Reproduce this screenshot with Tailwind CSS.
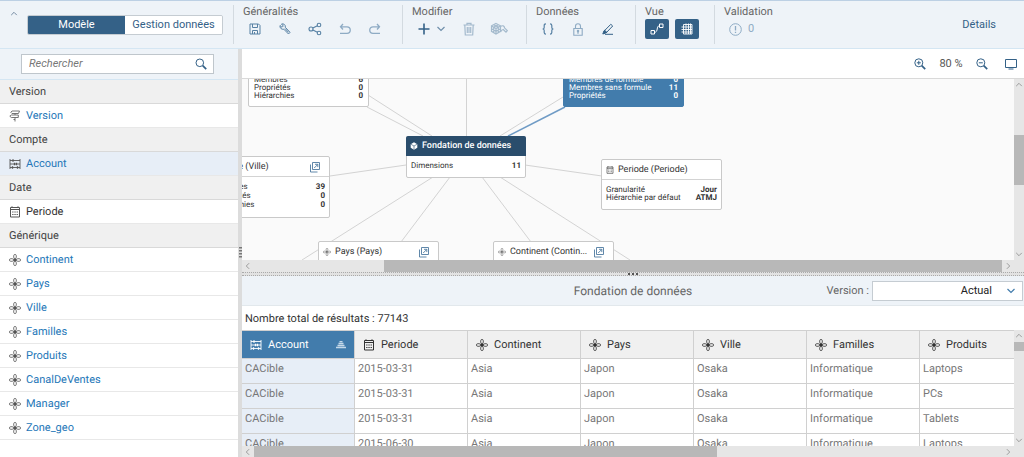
<!DOCTYPE html>
<html lang="fr">
<head>
<meta charset="utf-8">
<meta name="viewport" content="width=device-width, initial-scale=1">
<title>Modèle</title>
<script src="https://cdn.jsdelivr.net/npm/@tailwindcss/browser@4"></script>
</head>
<body class="h-screen overflow-hidden bg-white font-['Roboto','Noto_Sans',sans-serif] text-[11px] leading-4 text-[#333] [text-rendering:geometricPrecision]">

<!-- Shared icons -->
<svg class="hidden" aria-hidden="true">
  <symbol id="dim" viewBox="0 0 12 12" fill="none" stroke="currentColor" stroke-width="0.8">
    <rect x="4.700" y=".5" width="2.600" height="4" rx="1.200"/><rect x="4.700" y="7.500" width="2.600" height="4" rx="1.200"/>
    <rect x=".5" y="4.700" width="4" height="2.600" rx="1.200"/><rect x="7.500" y="4.700" width="4" height="2.600" rx="1.200"/>
    <rect x="5" y="5" width="2" height="2" fill="currentColor"/>
  </symbol>
  <symbol id="cal" viewBox="0 0 12 12" fill="none" stroke="currentColor">
    <path d="M1.500 1.500h9v9.500h-9z"/><path d="M1.500 3.500h9"/><path d="M3 .3v1.500M9 .3v1.500"/>
    <path d="M3.200 6h1.300M5.400 6h1.300M7.600 6h1.300M3.200 8.500h1.300M5.400 8.500h1.300M7.600 8.500h1.300"/>
  </symbol>
  <symbol id="acc" viewBox="0 0 12 12" fill="none" stroke="currentColor" stroke-width="0.9">
    <path d="M1 1v10M11 1v10M1 2.500h10M1 6h10M1 9.500h10"/><path d="M4 1.300v2.400M7.500 4.800v2.400M5.500 4.800v2.400M8.500 8.300v2.400M3.500 8.300v2.400" stroke-width="1.300"/>
  </symbol>
  <symbol id="ver" viewBox="0 0 12 12" fill="none" stroke="currentColor" stroke-width="0.9">
    <path d="M3 1h7.500l-1 2.500H3L1.800 2.300zM.8 6.200L2.300 5h7v2.500h-7zM6 7.500v4M6 3.500V5M4.500 9.500H6"/>
  </symbol>
  <symbol id="open" viewBox="0 0 12 12" fill="none" stroke="currentColor" stroke-width=".9">
    <path d="M3.500 1.500h7v7h-7zM1.500 3.500v7.500h7"/><path d="M5.200 7l3.500-3.500M6 3.300h2.800v2.800"/>
  </symbol>
  <symbol id="up" viewBox="0 0 10 6" fill="none" stroke="currentColor" stroke-width="1.200"><path d="M1.500 5L5 1.500 8.500 5"/></symbol>
  <symbol id="down" viewBox="0 0 10 6" fill="none" stroke="currentColor" stroke-width="1.200"><path d="M1.500 1L5 4.500 8.500 1"/></symbol>
  <symbol id="left" viewBox="0 0 6 10" fill="none" stroke="currentColor" stroke-width="1.200"><path d="M5 1.500L1.500 5 5 8.500"/></symbol>
  <symbol id="right" viewBox="0 0 6 10" fill="none" stroke="currentColor" stroke-width="1.200"><path d="M1 1.500L4.500 5 1 8.500"/></symbol>
</svg>

<div class="flex h-full flex-col">
  <!-- Toolbar -->
  <header class="flex h-[49px] shrink-0 items-stretch border-t border-b border-t-[#bcd0e4] border-b-[#d4e6f3] bg-[#eef3f8] text-[#346187]">
    <div class="flex w-[233px] shrink-0">
      <button aria-label="Réduire" class="flex h-6 w-[27px] items-center justify-center pl-px text-[#7189a0]"><svg class="h-[5px] w-2"><use href="#up"/></svg></button>
      <div class="mt-3.5 flex h-5 w-[196px] overflow-hidden rounded-xs border border-[#c5ccd2]">
        <button class="-my-px w-1/2 bg-[#346187] text-white">Modèle</button>
        <button class="w-1/2 bg-white">Gestion données</button>
      </div>
    </div>
    <section class="my-1 flex flex-col border-l border-[#d3dae0] pr-[15px] pl-[9px]">
      <h2 class="h-[14px] text-[#666] leading-[14px]">Généralités</h2>
      <div class="flex h-5 gap-1.5 text-[#5781a4]">
        <button aria-label="Enregistrer" class="grid w-6 place-items-center"><svg class="size-3" viewBox="0 0 12 12" fill="none" stroke="currentColor"><path d="M1 1h8.500L11 2.500V11H1zM3.500 1v3.500h5V1M3.500 11V7.500h5V11M5.500 9v2"/></svg></button>
        <button aria-label="Paramètres" class="grid w-6 place-items-center"><svg class="size-3" viewBox="0 0 12 12" fill="none" stroke="currentColor"><path d="M1 2.500l2 1.800L4.300 3 2.500 1C4.500.3 6.800 1.800 6.300 4.300l4.700 5L9.500 11 4.800 6.200C2.500 6.800.5 4.800 1 2.500zM6 5.500l3.500 3.800"/></svg></button>
        <button aria-label="Partager" class="grid w-6 place-items-center"><svg class="size-3.5" viewBox="0 0 14 14" fill="none" stroke="currentColor" stroke-width="1.100"><circle cx="3" cy="7" r="2"/><circle cx="11" cy="3" r="1.800"/><circle cx="11" cy="11" r="1.800"/><path d="M4.800 6.100l4.600-2.300M4.800 7.900l4.600 2.300"/></svg></button>
        <button aria-label="Annuler" class="grid w-6 place-items-center text-[#8eabc4]"><svg class="size-3" viewBox="0 0 12 12" fill="none" stroke="currentColor" stroke-width="1.300"><path d="M4 1L1.500 3.800 4 6.500M1.500 3.800H8a3.100 3.100 0 010 6.500H1"/></svg></button>
        <button aria-label="Rétablir" class="grid w-6 place-items-center text-[#8eabc4]"><svg class="size-3" viewBox="0 0 12 12" fill="none" stroke="currentColor" stroke-width="1.300"><path d="M8 1l2.500 2.800L8 6.500M10.500 3.800H4a3.100 3.100 0 000 6.500h7"/></svg></button>
      </div>
    </section>
    <section class="my-1 flex flex-col border-l border-[#d3dae0] pr-[15px] pl-[9px]">
      <h2 class="h-[14px] text-[#666] leading-[14px]">Modifier</h2>
      <div class="flex h-5 gap-1.5 text-[#a4bacd]">
        <button aria-label="Ajouter" class="flex w-[39px] items-center gap-1.5 pl-1.5 text-[#346187]"><svg class="size-3" viewBox="0 0 12 12" stroke="currentColor" stroke-width="1.600"><path d="M6 .5v11M.5 6h11"/></svg><svg class="h-1.5 w-2.5 text-[#6f8fab]"><use href="#down"/></svg></button>
        <button aria-label="Supprimer" class="grid w-6 place-items-center"><svg class="size-3.5" viewBox="0 0 14 14" fill="none" stroke="currentColor" stroke-width="1.200"><path d="M1.500 3h11M5 3V1.300h4V3M2.800 3l.5 10h7.400l.5-10M5.300 5v6M7 5v6M8.700 5v6"/></svg></button>
        <button aria-label="Modifier le modèle" class="grid w-6 place-items-center"><svg class="h-3.5 w-[18px]" viewBox="0 0 18 14" fill="none" stroke="currentColor" stroke-width="1.200"><path d="M6 1.500l4.500 2.300v5.500L6 12 1.500 9.300V3.800zM1.500 4L6 6.500 10.500 4M6 6.500V12M3.700 2.700l4.600 2.500v5.400M8.300 2.700L3.700 5.200v5.400M1.500 6.700L6 9.200l4.500-2.500"/><path d="M10.500 4.500c2-1.500 4-.5 4 1.300l2.800 2.900-1.300 1.500-2.800-2.700c-1.500.3-2 1.300-2.700 2.500"/></svg></button>
      </div>
    </section>
    <section class="my-1 flex flex-col border-l border-[#d3dae0] pr-[15px] pl-[9px]">
      <h2 class="h-[14px] text-[#666] leading-[14px]">Données</h2>
      <div class="flex h-5 gap-1.5">
        <button aria-label="Code" class="grid w-6 place-items-center text-[#5781a4]"><svg class="size-3" viewBox="0 0 12 12" fill="none" stroke="currentColor" stroke-width="1.200"><path d="M4 .8c-1.500 0-1.800.4-1.800 1.600v2C2.200 5.400 1.500 6 .6 6c.9 0 1.600.6 1.600 1.600v2c0 1.200.3 1.600 1.800 1.600M8 .8c1.500 0 1.800.4 1.800 1.600v2c0 1 .7 1.600 1.600 1.600-.9 0-1.600.6-1.600 1.600v2c0 1.200-.3 1.600-1.800 1.600"/></svg></button>
        <button aria-label="Verrouiller" class="grid w-6 place-items-center text-[#8eabc4]"><svg class="h-[13px] w-2.5" viewBox="0 0 10 13" fill="none" stroke="currentColor" stroke-width="1.100"><path d="M.8 5.500h8.400v6.700H.8zM2.500 5.500V3.300a2.500 2.500 0 015 0v2.200"/><path d="M5 8.500v2.200" stroke-width="1.300"/><circle cx="5" cy="8" r=".7"/></svg></button>
        <button aria-label="Effacer" class="grid w-6 place-items-center"><svg class="size-3" viewBox="0 0 12 12" fill="none" stroke="currentColor" stroke-width="1"><path d="M2 8.200L8.800 1.300l1.900 1.700L4 10zM3 11.300h8"/><path d="M2 7.800L.8 11l3-1 .8-.8L2.700 7.200z" fill="currentColor"/></svg></button>
      </div>
    </section>
    <section class="my-1 flex flex-col border-l border-[#d3dae0] pr-[15px] pl-[9px]">
      <h2 class="h-[14px] text-[#666] leading-[14px]">Vue</h2>
      <div class="flex h-5 gap-1.5 text-white">
        <button aria-label="Vue diagramme" class="grid w-6 place-items-center rounded-xs bg-[#346187]"><svg class="h-3 w-3.5" viewBox="0 0 14 12" fill="none" stroke="currentColor"><path d="M1 7.500h3.500V11H1zM9.500 1H13v3.500H9.500zM4.500 9.300c4 0 1.500-6.500 5-6.500"/></svg></button>
        <button aria-label="Vue tableau" class="grid w-6 place-items-center rounded-xs bg-[#346187]"><svg class="size-3" viewBox="0 0 12 12" fill="none" stroke="currentColor" stroke-width=".9"><path d="M2.500 1.500h8.500v9.500H2.500zM5 .5V11M7.500.5V11M9.500 .5V11M.5 4H11M.5 6.500H11M.5 9H11"/></svg></button>
      </div>
    </section>
    <section class="my-1 flex flex-col border-l border-[#d3dae0] pl-[9px]">
      <h2 class="h-[14px] text-[#666] leading-[14px]">Validation</h2>
      <button class="flex h-5 items-center gap-1.5 pl-[5px] text-[#8eabc4]"><svg class="size-[13px]" viewBox="0 0 13 13" fill="none" stroke="currentColor"><circle cx="6.500" cy="6.500" r="5.800"/><path d="M6.500 3v4.500M6.500 8.700v1.300" stroke-width="1.300"/></svg>0</button>
    </section>
    <button class="mr-7 ml-auto self-center">Détails</button>
  </header>

  <div class="flex min-h-0 flex-1">
    <!-- Dimension list -->
    <aside class="w-[238px] shrink-0 overflow-hidden">
      <div class="flex h-[31px] items-center border-b border-[#d4e6f3] bg-[#eef3f8] pr-6 pl-[21px]">
        <label class="flex h-5 w-full items-center border border-[#bfc6cc] bg-white pr-1.5 pl-[7px]">
          <input type="search" aria-label="Rechercher" placeholder="Rechercher" class="min-w-0 flex-1 italic outline-none placeholder:text-[#777]">
          <svg class="size-3 text-[#346187]" viewBox="0 0 12 12" fill="none" stroke="currentColor"><circle cx="4.800" cy="4.800" r="3.800"/><path d="M7.700 7.700l3.500 3.500" stroke-width="1.700"/></svg>
        </label>
      </div>
      <nav class="text-[#2577b8]">
        <h3 class="h-6 border-b border-[#d9d9d9] bg-[#f0f0f0] px-[9px] leading-6 text-[#444]">Version</h3>
        <a href="#" class="flex h-6 items-center gap-[5px] border-b border-[#e8e8e8] px-[9px]"><svg class="size-3 text-[#666]"><use href="#ver"/></svg>Version</a>
        <h3 class="h-6 border-b border-[#d9d9d9] bg-[#f0f0f0] px-[9px] leading-6 text-[#444]">Compte</h3>
        <a href="#" class="flex h-6 items-center gap-[5px] border-b border-[#e8e8e8] bg-[#e7eef7] px-[9px]"><svg class="size-3 text-[#555]"><use href="#acc"/></svg>Account</a>
        <h3 class="h-6 border-b border-[#d9d9d9] bg-[#f0f0f0] px-[9px] leading-6 text-[#444]">Date</h3>
        <a href="#" class="flex h-6 items-center gap-[5px] border-b border-[#e8e8e8] px-[9px] text-[#333]"><svg class="size-3 text-[#555]"><use href="#cal"/></svg>Periode</a>
        <h3 class="h-6 border-b border-[#d9d9d9] bg-[#f0f0f0] px-[9px] leading-6 text-[#444]">Générique</h3>
        <a href="#" class="flex h-6 items-center gap-[5px] border-b border-[#e8e8e8] px-[9px]"><svg class="size-3 text-[#555]"><use href="#dim"/></svg>Continent</a>
        <a href="#" class="flex h-6 items-center gap-[5px] border-b border-[#e8e8e8] px-[9px]"><svg class="size-3 text-[#555]"><use href="#dim"/></svg>Pays</a>
        <a href="#" class="flex h-6 items-center gap-[5px] border-b border-[#e8e8e8] px-[9px]"><svg class="size-3 text-[#555]"><use href="#dim"/></svg>Ville</a>
        <a href="#" class="flex h-6 items-center gap-[5px] border-b border-[#e8e8e8] px-[9px]"><svg class="size-3 text-[#555]"><use href="#dim"/></svg>Familles</a>
        <a href="#" class="flex h-6 items-center gap-[5px] border-b border-[#e8e8e8] px-[9px]"><svg class="size-3 text-[#555]"><use href="#dim"/></svg>Produits</a>
        <a href="#" class="flex h-6 items-center gap-[5px] border-b border-[#e8e8e8] px-[9px]"><svg class="size-3 text-[#555]"><use href="#dim"/></svg>CanalDeVentes</a>
        <a href="#" class="flex h-6 items-center gap-[5px] border-b border-[#e8e8e8] px-[9px]"><svg class="size-3 text-[#555]"><use href="#dim"/></svg>Manager</a>
        <a href="#" class="flex h-6 items-center gap-[5px] border-b border-[#e8e8e8] px-[9px]"><svg class="size-3 text-[#555]"><use href="#dim"/></svg>Zone_geo</a>
      </nav>
    </aside>
    <div class="flex w-1 shrink-0 items-center justify-center bg-[#dcdcdc]">
      <svg class="h-3 w-[3px] text-[#777]" viewBox="0 0 3 12" stroke="currentColor" stroke-width="3" stroke-dasharray="1.500 1.500"><path d="M1.500 0v12"/></svg>
    </div>

    <main class="flex min-w-0 flex-1 flex-col">
      <div class="flex h-[30px] shrink-0 items-center justify-end border-b border-[#d9d9d9] pr-1.5 text-[#346187]">
        <button aria-label="Zoom avant"><svg class="size-3" viewBox="0 0 12 12" fill="none" stroke="currentColor"><circle cx="4.800" cy="4.800" r="4"/><path d="M7.700 7.700l3.500 3.500" stroke-width="1.700"/><path d="M2.800 4.800h4M4.800 2.800v4"/></svg></button>
        <span class="w-[50px] text-center text-[#555]">80 %</span>
        <button aria-label="Zoom arrière"><svg class="size-3" viewBox="0 0 12 12" fill="none" stroke="currentColor"><circle cx="4.800" cy="4.800" r="4"/><path d="M7.700 7.700l3.500 3.500" stroke-width="1.700"/><path d="M2.800 4.800h4"/></svg></button>
        <button aria-label="Ajuster" class="ml-4"><svg class="h-3 w-[14px]" viewBox="0 0 14 12" fill="none" stroke="currentColor"><path d="M1.500 1.500h11v8h-11zM4.500 11h5"/></svg></button>
      </div>

      <!-- Diagram -->
      <div class="flex min-h-0 flex-1">
        <div class="relative min-w-0 flex-1 overflow-hidden bg-[#fafafa] text-[8px] leading-2">
          <svg class="absolute top-0 left-0" width="772" height="181" fill="none" stroke="#d3d3d3">
            <path d="M224.500 0v57M126 16l64 41M125 28l56 29M321 18l-63 39M88 97l76-11M283 86l77 11M191 98L60 181M208 98l-49 65M240 98l49 65M258 98l130 83"/>
            <path d="M323 28l-57 29" stroke="#6f9bc5" stroke-width="1.500"/>
          </svg>
          <article class="absolute top-[-30px] left-1.5 w-[121px] rounded-xs border border-[#c9c9c9] bg-white">
            <h4 class="h-5 border-b border-[#d3d3d3] px-[5px] text-[9px] leading-5">Familles</h4>
            <dl class="grid grid-cols-[1fr_auto] px-[5px] pt-1.5 pb-1.5"><dt>Membres</dt><dd class="font-bold">6</dd><dt>Propriétés</dt><dd class="font-bold">0</dd><dt>Hiérarchies</dt><dd class="font-bold">0</dd></dl>
          </article>
          <article class="absolute top-[-30px] left-[321px] w-[121px] rounded-xs border border-[#427cac] bg-[#427cac] text-white">
            <h4 class="h-5 border-b border-white/40 px-[5px] text-[9px] leading-5">Account</h4>
            <dl class="grid grid-cols-[1fr_auto] px-[5px] pt-1.5 pb-1.5"><dt>Membres de formule</dt><dd class="text-right font-bold">0</dd><dt>Membres sans formule</dt><dd class="font-bold">11</dd><dt>Propriétés</dt><dd class="text-right font-bold">0</dd></dl>
          </article>
          <article class="absolute top-[77px] left-[-33px] w-[121px] rounded-xs border border-[#c9c9c9] bg-white">
            <h4 class="flex h-5 items-center gap-1 border-b border-[#d3d3d3] px-1 text-[9px]"><svg class="size-2 text-[#666]"><use href="#dim"/></svg>Ville (Ville)<svg class="mr-1 ml-auto size-3 text-[#4f7ba0]"><use href="#open"/></svg></h4>
            <dl class="grid grid-cols-[1fr_auto] px-1 pt-[5px] pb-2 leading-[9px]"><dt>Membres</dt><dd class="font-bold">39</dd><dt>Propriétés</dt><dd class="text-right font-bold">0</dd><dt>Hiérarchies</dt><dd class="text-right font-bold">0</dd></dl>
          </article>
          <article class="absolute top-[57px] left-[164px] w-[120px] rounded-xs border border-[#c9c9c9] bg-white">
            <h4 class="-m-px flex h-5 items-center gap-1 rounded-t-xs bg-[#2a4d6c] px-1 pb-px text-[9px] font-medium text-white"><svg class="size-2" viewBox="0 0 8 8" fill="none" stroke="currentColor"><path d="M4 .3l3.300 1.900v3.600L4 7.700.7 5.800V2.200z" fill="currentColor" stroke="none"/><path d="M1 2.300L4 4l3-1.700M4 4v3.500" stroke="#2a4d6c" stroke-width=".6"/></svg>Fondation de données</h4>
            <dl class="flex justify-between px-1 pt-[7px] pb-[7px]"><dt>Dimensions</dt><dd class="font-bold">11</dd></dl>
          </article>
          <article class="absolute top-20 left-[359px] w-[121px] rounded-xs border border-[#c9c9c9] bg-white">
            <h4 class="flex h-5 items-center gap-1 border-b border-[#d3d3d3] px-1 text-[9px]"><svg class="size-2 text-[#444]"><use href="#cal"/></svg>Periode (Periode)</h4>
            <dl class="grid grid-cols-[1fr_auto] px-1 pt-1.5 pb-[7px]"><dt>Granularité</dt><dd class="text-right font-bold">Jour</dd><dt>Hiérarchie par défaut</dt><dd class="font-bold">ATMJ</dd></dl>
          </article>
          <article class="absolute top-[162px] left-[76px] w-[121px] rounded-xs border border-[#c9c9c9] bg-white">
            <h4 class="flex h-5 items-center gap-1 border-b border-[#d3d3d3] pr-[7px] pl-1 text-[9px]"><svg class="size-2 text-[#666]"><use href="#dim"/></svg>Pays (Pays)<svg class="mr-px ml-auto size-3 text-[#4f7ba0]"><use href="#open"/></svg></h4>
          </article>
          <article class="absolute top-[162px] left-[251px] w-[121px] rounded-xs border border-[#c9c9c9] bg-white">
            <h4 class="flex h-5 items-center gap-1 border-b border-[#d3d3d3] pr-[7px] pl-1 text-[9px]"><svg class="size-2 text-[#666]"><use href="#dim"/></svg>Continent (Contin...<svg class="mr-px ml-auto size-3 text-[#4f7ba0]"><use href="#open"/></svg></h4>
          </article>
        </div>
        <div class="flex w-2.5 shrink-0 flex-col items-center bg-[#e6e6e6] py-[3px] text-[#999]">
          <svg class="h-[5px] w-2"><use href="#up"/></svg>
          <div class="flex-5"></div>
          <div class="h-[50px] w-full bg-[#b8b8b8]"></div>
          <div class="flex-7"></div>
          <svg class="h-[5px] w-2"><use href="#down"/></svg>
        </div>
      </div>
      <div class="flex h-3 shrink-0 items-center bg-[#e6e6e6] pr-2.5 text-[#999]">
        <svg class="ml-[3px] h-2 w-[5px]"><use href="#left"/></svg>
        <div class="ml-auto h-full w-4/5 bg-[#b8b8b8]"></div>
        <svg class="mr-[3px] ml-1 h-2 w-[5px]"><use href="#right"/></svg>
      </div>
      <div class="flex h-1 shrink-0 items-center justify-center border-y border-dotted border-[#aaa] bg-[#e2e2e2]">
        <div class="w-2.5 border-t-2 border-dotted border-[#555]"></div>
      </div>

      <!-- Data preview -->
      <section class="flex h-[181px] shrink-0 flex-col">
        <div class="grid h-[30px] shrink-0 grid-cols-[1fr_auto_1fr] items-center border-b border-[#e2e8ec] bg-[#eef3f8] text-[#666]">
          <h2 class="col-start-2 text-[12px]">Fondation de données</h2>
          <div class="flex items-center justify-end gap-[3px] pr-px">
            <label for="version">Version :</label>
            <div class="relative w-[151px]">
              <select id="version" class="h-5 w-full appearance-none border border-[#c5ccd2] bg-white pr-[30px] text-right [text-align-last:right] text-[#222]"><option>Actual</option></select>
              <svg class="pointer-events-none absolute top-[7px] right-[7px] h-1.5 w-2.5 text-[#427cac]"><use href="#down"/></svg>
            </div>
          </div>
        </div>
        <p class="h-6 shrink-0 pl-[3px] leading-[26px]">Nombre total de résultats : 77143</p>
        <div class="flex min-h-0 flex-1">
          <div class="min-w-0 flex-1 overflow-hidden">
            <table class="w-[791px] table-fixed border-separate border-spacing-0 text-left text-[#777] [&_td]:h-[25px] [&_td]:border-r [&_td]:border-b [&_td]:border-[#d0d0d0] [&_td]:px-[3px] [&_td]:pb-1.5 [&_td]:pt-0.5 [&_th]:h-[29px] [&_th]:border-t [&_th]:border-r [&_th]:border-b [&_th]:border-[#d0d0d0] [&_th]:bg-[#f0f0f0] [&_th]:px-2 [&_th]:font-normal">
              <thead class="text-[#333]">
                <tr>
                  <th class="bg-[#427cac]! text-white"><span class="flex items-center gap-1.5"><svg class="size-3"><use href="#acc"/></svg>Account<svg class="ml-auto h-2 w-2.5" viewBox="0 0 10 8" fill="none" stroke="#c5d9e9"><path d="M3.500.5h3M2.500 2.500h5M1.500 4.500h7M0 6.500h10" stroke-width="1.400"/></svg></span></th>
                  <th><span class="flex items-center gap-1.5"><svg class="size-3"><use href="#cal"/></svg>Periode</span></th>
                  <th><span class="flex items-center gap-1.5"><svg class="size-3"><use href="#dim"/></svg>Continent</span></th>
                  <th><span class="flex items-center gap-1.5"><svg class="size-3"><use href="#dim"/></svg>Pays</span></th>
                  <th><span class="flex items-center gap-1.5"><svg class="size-3"><use href="#dim"/></svg>Ville</span></th>
                  <th><span class="flex items-center gap-1.5"><svg class="size-3"><use href="#dim"/></svg>Familles</span></th>
                  <th><span class="flex items-center gap-1.5"><svg class="size-3"><use href="#dim"/></svg>Produits</span></th>
                </tr>
              </thead>
              <tbody>
                <tr><td class="bg-[#e7eef7]">CACible</td><td>2015-03-31</td><td>Asia</td><td>Japon</td><td>Osaka</td><td>Informatique</td><td>Laptops</td></tr>
                <tr><td class="bg-[#e7eef7]">CACible</td><td>2015-03-31</td><td>Asia</td><td>Japon</td><td>Osaka</td><td>Informatique</td><td>PCs</td></tr>
                <tr><td class="bg-[#e7eef7]">CACible</td><td>2015-03-31</td><td>Asia</td><td>Japon</td><td>Osaka</td><td>Informatique</td><td>Tablets</td></tr>
                <tr><td class="bg-[#e7eef7]">CACible</td><td>2015-06-30</td><td>Asia</td><td>Japon</td><td>Osaka</td><td>Informatique</td><td>Laptops</td></tr>
              </tbody>
            </table>
          </div>
          <div class="flex w-2.5 shrink-0 flex-col items-center bg-[#e6e6e6] py-[3px] text-[#999]">
            <svg class="h-[5px] w-2"><use href="#up"/></svg>
            <div class="mt-1 h-[9px] w-full bg-[#b8b8b8]"></div>
            <svg class="mt-auto h-[5px] w-2"><use href="#down"/></svg>
          </div>
        </div>
        <div class="flex h-[11px] shrink-0 items-center bg-[#e6e6e6] pr-2.5 text-[#999]">
          <svg class="mr-1 ml-[3px] h-2 w-[5px]"><use href="#left"/></svg>
          <div class="h-full w-3/5 bg-[#b8b8b8]"></div>
          <svg class="mr-[3px] ml-auto h-2 w-[5px]"><use href="#right"/></svg>
        </div>
      </section>
    </main>
  </div>
</div>
</body>
</html>
